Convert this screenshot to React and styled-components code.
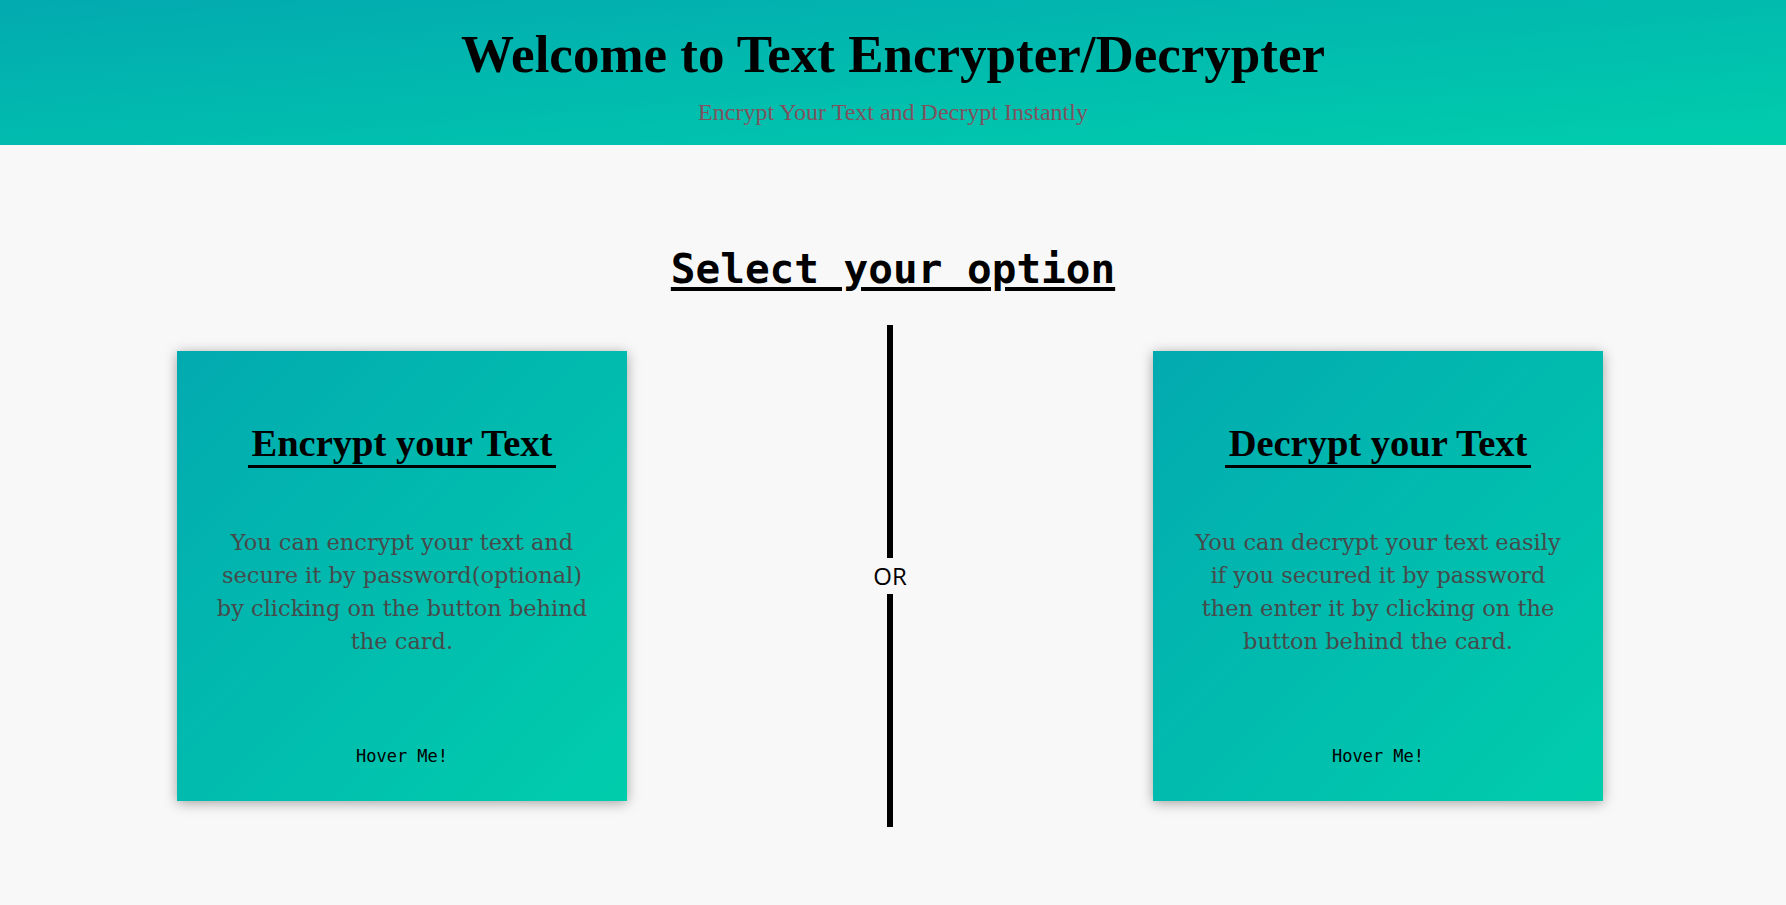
import React from 'react'
import styled, { createGlobalStyle } from 'styled-components'

const GlobalStyle = createGlobalStyle`
  html, body {
    margin: 0;
    padding: 0;
    background-color: #f8f8f8;
  }
`

const Header = styled.header`
  height: 145px;
  box-sizing: border-box;
  padding-top: 24px;
  text-align: center;
  background: linear-gradient(to right bottom, #02aab0, #00cdac);
`

const HeaderTitle = styled.h1`
  margin: 0;
  font-family: 'Liberation Serif', serif;
  font-weight: bold;
  font-size: 53px;
  color: #000;
`

const HeaderSub = styled.p`
  margin: 15px 0 0;
  font-family: 'Liberation Serif', serif;
  font-size: 24px;
  color: #80525e;
`

const Main = styled.main`
  display: flex;
  flex-direction: column;
  align-items: center;
  padding-top: 100px;
`

const SelectTitle = styled.h2`
  margin: 0;
  font-family: 'DejaVu Sans Mono', monospace;
  font-weight: bold;
  font-size: 41px;
  color: #000;
  text-decoration: underline;
  text-decoration-thickness: 4px;
  text-underline-offset: 4px;
`

const Row = styled.div`
  display: flex;
  align-items: flex-start;
  justify-content: center;
  gap: 260px;
  margin-top: 32px;
  padding-right: 6px;
`

const Card = styled.div`
  width: 450px;
  height: 450px;
  margin-top: 26px;
  box-sizing: border-box;
  padding: 70px 35px 35px;
  display: flex;
  flex-direction: column;
  align-items: center;
  text-align: center;
  background: linear-gradient(to right bottom, #02aab0, #00cdac);
  box-shadow: 0 2px 12px rgba(0, 0, 0, 0.35);
`

const CardTitle = styled.h3`
  margin: 0;
  padding: 0 4px;
  font-family: 'Liberation Serif', serif;
  font-weight: bold;
  font-size: 38.5px;
  color: #000;
  border-bottom: 3px solid #000;
`

const CardText = styled.p`
  margin: 58px 0 0;
  font-family: 'DejaVu Serif', serif;
  font-size: 22.5px;
  line-height: 33px;
  color: #464a4a;
`

const HoverLabel = styled.span`
  margin-top: auto;
  font-family: 'DejaVu Sans Mono', monospace;
  font-size: 17px;
  color: #000;
`

const Divider = styled.div`
  width: 6px;
  height: 502px;
  display: flex;
  flex-direction: column;
  align-items: center;
`

const Line = styled.div`
  flex: 1;
  width: 6px;
  background-color: #000;
`

const OrText = styled.span`
  font-family: 'Open Sans', sans-serif;
  font-size: 24px;
  line-height: 36px;
  color: #000;
`

const options = [
  {
    title: 'Encrypt your Text',
    text: 'You can encrypt your text and secure it by password(optional) by clicking on the button behind the card.',
  },
  {
    title: 'Decrypt your Text',
    text: 'You can decrypt your text easily if you secured it by password then enter it by clicking on the button behind the card.',
  },
]

function OptionCard({ title, text }) {
  return (
    <Card>
      <CardTitle>{title}</CardTitle>
      <CardText>{text}</CardText>
      <HoverLabel>Hover Me!</HoverLabel>
    </Card>
  )
}

export default function App() {
  return (
    <>
      <GlobalStyle />
      <Header>
        <HeaderTitle>Welcome to Text Encrypter/Decrypter</HeaderTitle>
        <HeaderSub>Encrypt Your Text and Decrypt Instantly</HeaderSub>
      </Header>
      <Main>
        <SelectTitle>Select your option</SelectTitle>
        <Row>
          <OptionCard {...options[0]} />
          <Divider>
            <Line />
            <OrText>OR</OrText>
            <Line />
          </Divider>
          <OptionCard {...options[1]} />
        </Row>
      </Main>
    </>
  )
}
